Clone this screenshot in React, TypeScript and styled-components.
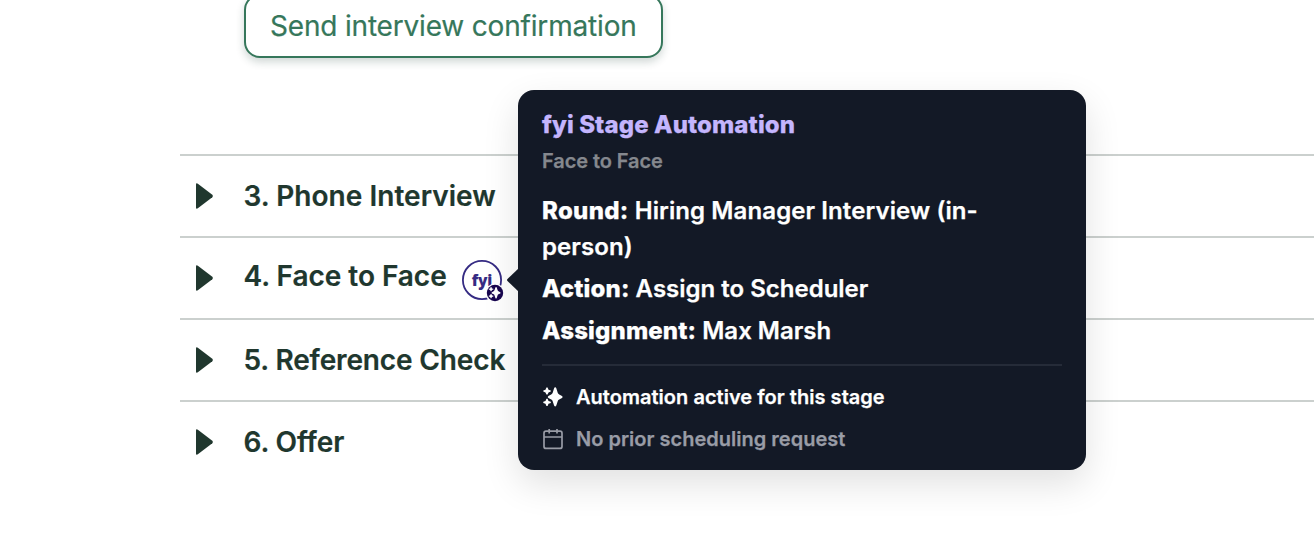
import React from "react";
import styled, { createGlobalStyle } from "styled-components";

const GlobalStyle = createGlobalStyle`
  * { box-sizing: border-box; }
  html, body { margin: 0; background: #fff; }
  body { overflow: hidden; font-family: Inter, "Liberation Sans", sans-serif; }
`;

const Page = styled.main`
  position: relative;
  height: 556px;
  padding-left: 180px;
  overflow: hidden;
  background: #fff;
`;

const Actions = styled.div`
  display: flex;
  margin: -6px 0 96px 64px;
`;

const ConfirmButton = styled.button`
  width: 419px;
  height: 64px;
  padding: 0 0 0 24px;
  text-align: left;
  white-space: nowrap;
  border: 2px solid #36775b;
  border-radius: 16px;
  background: #fff;
  box-shadow: 0 4px 8px rgba(21, 55, 44, 0.2);
  color: #36775b;
  font: 400 28px/36px Inter, sans-serif;
  letter-spacing: -0.18px;
  -webkit-text-stroke: 0.2px currentColor;
`;

const StageList = styled.ol`
  margin: 0;
  padding: 0;
  list-style: none;
`;

const StageRow = styled.li`
  display: flex;
  align-items: center;
  height: 82px;
  padding-left: 16px;
  border-top: 2px solid #cbd0ce;
`;

const Caret = styled.svg`
  width: 18px;
  height: 26px;
  margin-right: 29.5px;
  fill: #20372e;
`;

const StageName = styled.span<{ $spacing: number; $raised?: boolean }>`
  padding-bottom: ${(p) => (p.$raised ? 4 : 0)}px;
  color: #20372e;
  font-size: 28px;
  font-weight: 600;
  line-height: 36px;
  white-space: nowrap;
  letter-spacing: ${(p) => p.$spacing}px;
  -webkit-text-stroke: 0.2px currentColor;
`;

const StageAnchor = styled.div`
  position: absolute;
  left: 462px;
  top: 260px;
  width: 44px;
  height: 44px;
`;

const Tooltip = styled.section`
  position: absolute;
  left: 518px;
  top: 90px;
  width: 568px;
  height: 380px;
  padding: 17px 24px;
  border-radius: 16px;
  background: #131926;
  color: #fff;
  box-shadow: 0 14px 36px rgba(0, 0, 0, 0.12);
  -webkit-text-stroke: 0.25px currentColor;
`;

const Arrow = styled.svg`
  position: absolute;
  left: -11px;
  top: 178px;
  width: 12px;
  height: 24px;
  fill: #131926;
`;

const Title = styled.h2<{ $spacing: number }>`
  margin: 0;
  color: #c4b5fd;
  font-size: 24px;
  font-weight: 800;
  line-height: 36px;
  letter-spacing: ${(p) => p.$spacing}px;
`;

const Subtitle = styled.p<{ $spacing: number }>`
  margin: 3px 0 17px;
  color: #85888e;
  font-size: 20px;
  font-weight: 600;
  line-height: 30px;
  letter-spacing: ${(p) => p.$spacing}px;
`;

const Detail = styled.p<{ $spacing: number }>`
  margin: 0 0 6px;
  font-size: 24px;
  font-weight: 600;
  line-height: 36px;
  white-space: nowrap;
  letter-spacing: ${(p) => p.$spacing}px;
`;

const Label = styled.strong<{ $spacing: number }>`
  font-weight: 800;
  letter-spacing: ${(p) => p.$spacing}px;
`;

const StatusGroup = styled.div`
  margin-top: 15px;
  padding-top: 16px;
  border-top: 2px solid #252b38;
`;

const Status = styled.div<{ $muted?: boolean; $spacing: number }>`
  display: flex;
  align-items: center;
  gap: 12px;
  height: 30px;
  margin-bottom: 12px;
  color: ${(p) => (p.$muted ? "#999ca6" : "#fff")};
  font-size: 20px;
  font-weight: 600;
  white-space: nowrap;
  letter-spacing: ${(p) => p.$spacing}px;
`;

const StatusIcon = styled.svg`
  width: 22px;
  height: 22px;
`;

const stages = [
  { name: "3. Phone Interview", spacing: 0.04 },
  { name: "4. Face to Face", spacing: -0.03, automated: true },
  { name: "5. Reference Check", spacing: -0.14 },
  { name: "6. Offer", spacing: -0.12 },
];

const SPARKLES =
  "M13.2 1.3Q14 1.3 14.3 2.3L15.8 7Q16.2 8 17.2 8.4L20 9.9Q21.4 11 20 12L17.2 13.5Q16.2 13.9 15.8 14.9L14.3 19.6Q13.2 21.4 12.1 19.6L10.6 14.9Q10.2 13.9 9.2 13.5L6.4 12Q5 11 6.4 9.9L9.2 8.4Q10.2 8 10.6 7L12.1 2.3Q12.4 1.3 13.2 1.3Z M4.4 1.6H5.6L6.5 3.8L8.8 4.5V5.6L6.5 6.4L5.6 8.6H4.4L3.5 6.4L1.3 5.6V4.5L3.5 3.8Z M4.4 12.8H5.6L6.5 15L8.8 15.8V16.9L6.5 17.7L5.6 19.9H4.4L3.5 17.7L1.3 16.9V15.8L3.5 15Z";

function AutomationBadge() {
  return (
    <StageAnchor>
      <svg width="44" height="44" viewBox="0 0 44 44">
        <circle cx="20" cy="20" r="19.1" fill="#fff" stroke="#352b83" strokeWidth="1.8" />
        <text x="9.7" y="26" fill="#352b83" fontFamily="Open Sans, sans-serif" fontWeight="800" fontSize="15.5" textLength="20.6" lengthAdjust="spacing">
          fyi
        </text>
        <circle cx="33" cy="33" r="9.6" fill="#fff" />
        <circle cx="33" cy="33" r="8.2" fill="#18064f" />
        <path transform="translate(26 26.1) scale(.61)" d={SPARKLES} fill="#fff" />
      </svg>
    </StageAnchor>
  );
}

export default function App() {
  return (
    <>
      <GlobalStyle />
      <Page>
        <Actions>
          <ConfirmButton>Send interview confirmation</ConfirmButton>
        </Actions>
        <StageList>
          {stages.map((stage) => (
            <StageRow key={stage.name}>
              <Caret viewBox="0 0 18 26">
                <path d="M0 1.2Q0 0 1.4 .4L2.2 .9L16.3 11.8Q17.6 13 16.3 14.2L2.2 25.1L1.4 25.6Q0 26 0 24.8Z" />
              </Caret>
              <StageName $spacing={stage.spacing} $raised={stage.automated}>
                {stage.name}
              </StageName>
            </StageRow>
          ))}
        </StageList>
        <AutomationBadge />
        <Tooltip role="tooltip">
          <Arrow viewBox="0 0 12 24">
            <path d="M12 0L.5 11Q-.5 12 .5 13L12 24Z" />
          </Arrow>
          <Title $spacing={0.11}>fyi Stage Automation</Title>
          <Subtitle $spacing={-0.08}>Face to Face</Subtitle>
          <Detail $spacing={0.1}>
            <Label $spacing={0.3}>Round:</Label> Hiring Manager Interview (in-
            <br />
            person)
          </Detail>
          <Detail $spacing={0}>
            <Label $spacing={0.15}>Action:</Label> Assign to Scheduler
          </Detail>
          <Detail $spacing={0}>
            <Label $spacing={0.15}>Assignment:</Label> Max Marsh
          </Detail>
          <StatusGroup>
            <Status $spacing={0.03}>
              <StatusIcon viewBox="0 0 22 22" fill="currentColor">
                <path d={SPARKLES} />
              </StatusIcon>
              Automation active for this stage
            </Status>
            <Status $muted $spacing={0.01}>
              <StatusIcon viewBox="0 0 22 22" fill="none" stroke="currentColor" strokeWidth="1.7">
                <rect x="2" y="3.2" width="18" height="17.2" rx="2" />
                <path d="M2 9H20M7.2 1V5.6M15 1V5.6" />
              </StatusIcon>
              No prior scheduling request
            </Status>
          </StatusGroup>
        </Tooltip>
      </Page>
    </>
  );
}
